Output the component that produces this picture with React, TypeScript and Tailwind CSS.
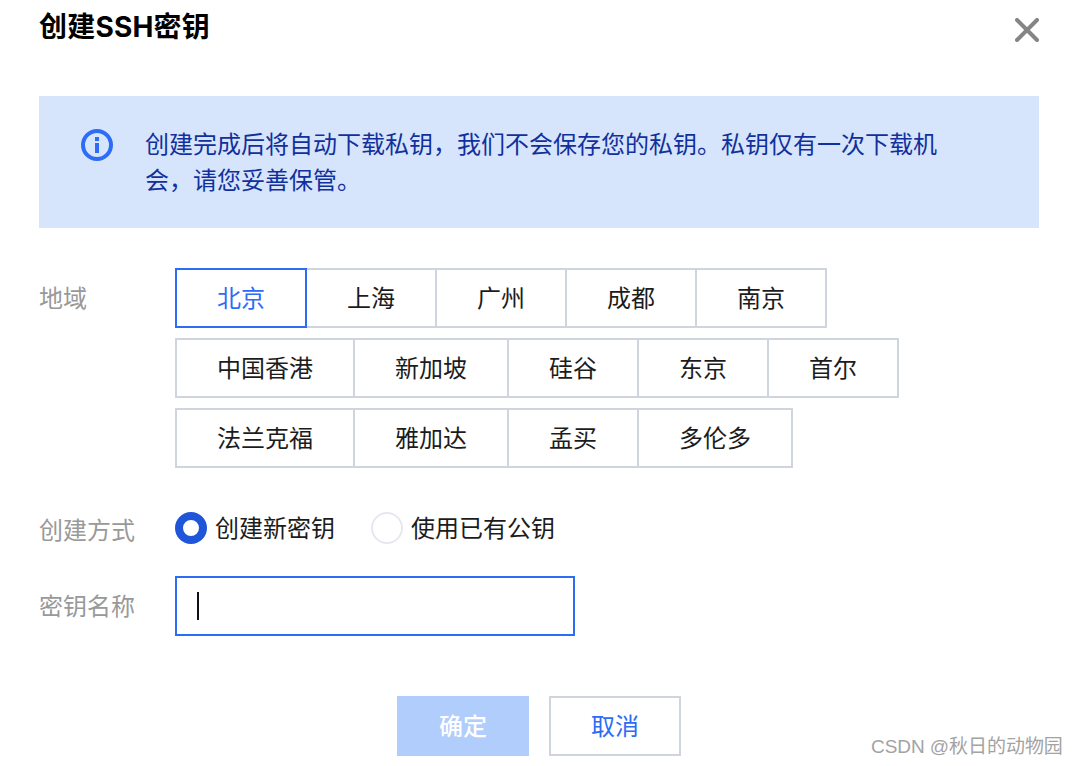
const regionRows = [
  ['北京', '上海', '广州', '成都', '南京'],
  ['中国香港', '新加坡', '硅谷', '东京', '首尔'],
  ['法兰克福', '雅加达', '孟买', '多伦多'],
];

function RegionButton({ name, first, active }: { name: string; first: boolean; active: boolean }) {
  return (
    <button
      className={`h-[60px] min-w-[132px] border-2 px-10 pt-[2px] text-2xl ${first ? '' : '-ml-[2px]'} ${
        active ? 'relative z-10 border-[#2d6cf5] text-[#2d6cf5]' : 'border-[#d0d4de] text-[#1c1c1c]'
      }`}
    >
      {name}
    </button>
  );
}

export default function App() {
  return (
    <div
      className="relative h-[766px] w-[1076px] overflow-hidden bg-white px-[39px] pr-[37px]"
      style={{ fontFamily: 'Inter, "Noto Sans CJK SC", sans-serif' }}
    >
      <header className="flex h-[96px] items-start justify-between">
        <h1 className="mt-[7px] text-[28px] leading-10 font-bold tracking-[0.2px] text-black">创建SSH密钥</h1>
        <button className="mt-[18px] text-[#858585]">
          <svg className="h-6 w-6" viewBox="0 0 24 24" fill="none" stroke="currentColor" strokeWidth="4" strokeLinecap="round">
            <path d="M2 2l20 20M22 2L2 22" />
          </svg>
        </button>
      </header>

      <div className="flex h-[132px] bg-[#d6e5fc] pt-[31px] pl-[42px]">
        <svg className="mt-[2px] h-8 w-8 shrink-0" viewBox="0 0 32 32" fill="none">
          <circle cx="16" cy="16" r="14" stroke="#2d6cf5" strokeWidth="4" />
          <rect x="14" y="14" width="4" height="10" fill="#2d6cf5" />
          <rect x="14" y="8" width="4" height="4" fill="#2d6cf5" />
        </svg>
        <p className="ml-8 w-[800px] text-2xl leading-9 text-[#12309c]">
          创建完成后将自动下载私钥，我们不会保存您的私钥。私钥仅有一次下载机会，请您妥善保管。
        </p>
      </div>

      <div className="mt-10 flex">
        <div className="w-[136px] pt-[13px] text-2xl leading-9 text-[#999999]">地域</div>
        <div className="flex flex-col gap-[10px]">
          {regionRows.map((row, i) => (
            <div key={i} className="flex">
              {row.map((name, j) => (
                <RegionButton key={name} name={name} first={j === 0} active={name === '北京'} />
              ))}
            </div>
          ))}
        </div>
      </div>

      <div className="mt-11 flex h-9 items-start">
        <div className="w-[136px] pt-[1px] text-2xl leading-9 text-[#999999]">创建方式</div>
        <div className="flex h-8 items-center">
          <span className="h-8 w-8 rounded-full border-[8px] border-[#1f55d8] bg-white" />
          <span className="ml-2 pt-[2px] text-2xl text-[#1c1c1c]">创建新密钥</span>
          <span className="ml-9 h-8 w-8 rounded-full border-2 border-[#e6e8ef] bg-white" />
          <span className="ml-2 pt-[2px] text-2xl text-[#1c1c1c]">使用已有公钥</span>
        </div>
      </div>

      <div className="mt-7 flex items-center">
        <div className="w-[136px] pt-[2px] text-2xl leading-9 text-[#999999]">密钥名称</div>
        <div className="flex h-[60px] w-[400px] items-center border-2 border-[#2d6cf5] pl-5">
          <span className="h-7 w-[2px] bg-[#111111]" />
        </div>
      </div>

      <div className="mt-[60px] ml-[358px] flex gap-5">
        <button className="h-[60px] w-[132px] bg-[#b0cdfb] pt-[2px] text-2xl font-medium text-white">确定</button>
        <button className="h-[60px] w-[132px] border-2 border-[#d0d4de] pt-[2px] text-2xl text-[#2d6cf5]">取消</button>
      </div>

      <span
        className="absolute top-[733px] left-[871px] text-[19px] leading-7 tracking-[-0.05px] whitespace-nowrap text-[#a3a3a3]"
        style={{ fontFamily: '"Liberation Sans", "Noto Sans CJK SC", sans-serif' }}
      >
        CSDN @秋日的动物园
      </span>
    </div>
  );
}
